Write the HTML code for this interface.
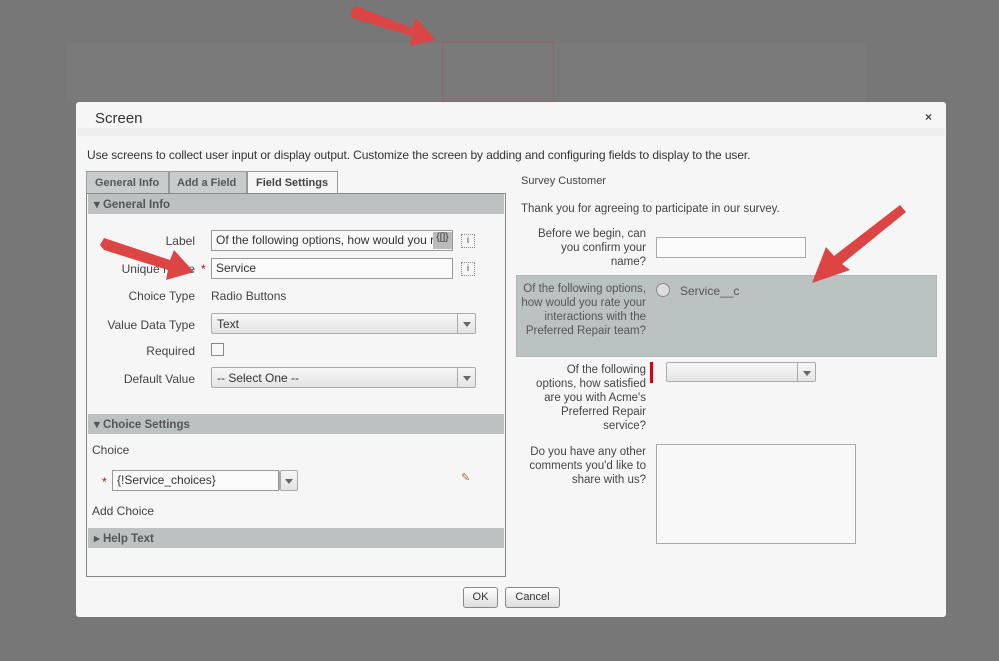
<!DOCTYPE html>
<html><head><meta charset="utf-8"><style>
*{margin:0;padding:0;box-sizing:border-box}
body{width:999px;height:661px;background:#777;position:relative;overflow:hidden;font-family:"Liberation Sans",sans-serif;font-size:12px;color:#333}
.a{position:absolute}
.bar{position:absolute;left:1px;right:1px;height:20px;background:#bcc2c2;font-weight:bold;color:#555;padding:3px 0 0 6px;font-size:11.5px}
.lbl{position:absolute;text-align:right;color:#444}
.inp{position:absolute;border:1px solid #999;background:#fafafa;height:21px;padding:2px 4px;color:#333}
.sel{position:absolute;border:1px solid #aaa;background:linear-gradient(#f7f7f7,#e4e4e4);height:21px;padding:3px 5px;border-radius:2px}
.sel:after{content:"";position:absolute;right:0;top:0;width:17px;height:19px;border-left:1px solid #aaa}
.sel i{position:absolute;right:4px;top:8px;border:4px solid transparent;border-top:5px solid #666}
.btn{position:absolute;border:1px solid #888;border-radius:3px;background:linear-gradient(#fff,#ddd);height:21px;text-align:center;padding-top:3px;font-size:11px}
.rl{position:absolute;text-align:right;color:#444;line-height:14px;font-size:11.5px}
</style></head><body>
<div class="a" style="left:66px;top:43px;width:800px;height:58px;background:#7a7a7a"></div>
<div class="a" style="left:442px;top:42px;width:112px;height:60px;border:1px dotted #a55"></div>

<div class="a" style="left:76px;top:102px;width:870px;height:515px;background:#f6f6f6;border-radius:3px"></div>
<div class="a" style="left:95px;top:110px;font-size:15px;color:#333">Screen</div>
<div class="a" style="left:925px;top:110px;font-size:12px;font-weight:bold;color:#444">×</div>
<div class="a" style="left:77px;top:128px;width:868px;height:8px;background:#eee"></div>
<div class="a" style="left:87px;top:148px;font-size:12px;color:#333;letter-spacing:-0.1px">Use screens to collect user input or display output. Customize the screen by adding and configuring fields to display to the user.</div>

<div class="a" style="left:86px;top:171px;width:83px;height:23px;border:1px solid #999;background:#c8cccc;font-weight:bold;color:#555;font-size:11px;padding:5px 0 0 8px">General Info</div>
<div class="a" style="left:169px;top:171px;width:78px;height:23px;border:1px solid #999;background:#c8cccc;font-weight:bold;color:#555;font-size:11px;padding:5px 0 0 7px">Add a Field</div>
<div class="a" style="left:247px;top:171px;width:91px;height:23px;border:1px solid #999;border-bottom:none;background:#f6f6f6;font-weight:bold;color:#444;font-size:11px;padding:5px 0 0 8px">Field Settings</div>

<div class="a" style="left:86px;top:193px;width:420px;height:384px;border:1px solid #888">
 <div class="bar" style="top:0">▾ General Info</div>
 <div class="bar" style="top:220px">▾ Choice Settings</div>
 <div class="bar" style="top:334px">▸ Help Text</div>
</div>
<div class="lbl" style="left:90px;width:105px;top:234px">Label</div>
<div class="inp" style="left:211px;top:230px;width:242px;white-space:nowrap;overflow:hidden">Of the following options, how would you r</div>
<div class="a" style="left:433px;top:232px;width:19px;height:17px;background:#bbb;font-size:10px;text-align:center">{[]}</div>
<div class="a" style="left:461px;top:234px;width:14px;height:14px;border:1px dotted #888;font-size:9px;text-align:center">i</div>
<div class="lbl" style="left:90px;width:105px;top:262px">Unique Name</div>
<div class="a" style="left:201px;top:262px;color:#c00">*</div>
<div class="inp" style="left:211px;top:258px;width:242px">Service</div>
<div class="a" style="left:461px;top:262px;width:14px;height:14px;border:1px dotted #888;font-size:9px;text-align:center">i</div>
<div class="lbl" style="left:90px;width:105px;top:289px">Choice Type</div>
<div class="a" style="left:211px;top:289px;color:#444">Radio Buttons</div>
<div class="lbl" style="left:90px;width:105px;top:318px">Value Data Type</div>
<div class="sel" style="left:211px;top:313px;width:265px">Text<i></i></div>
<div class="lbl" style="left:90px;width:105px;top:344px">Required</div>
<div class="a" style="left:211px;top:343px;width:13px;height:13px;border:1px solid #888;background:#f8f8f8"></div>
<div class="lbl" style="left:90px;width:105px;top:372px">Default Value</div>
<div class="sel" style="left:211px;top:367px;width:265px">-- Select One --<i></i></div>

<div class="a" style="left:92px;top:443px;color:#444">Choice</div>
<div class="a" style="left:102px;top:475px;color:#c00">*</div>
<div class="inp" style="left:112px;top:470px;width:167px">{!Service_choices}</div>
<div class="sel" style="left:280px;top:470px;width:18px;padding:0"><i style="right:4px"></i></div>
<div class="a" style="left:461px;top:471px;color:#b63;font-size:11px">✎</div>
<div class="a" style="left:92px;top:504px;color:#444">Add Choice</div>

<div class="a" style="left:521px;top:175px;color:#444;font-size:11px">Survey Customer</div>
<div class="a" style="left:521px;top:203px;color:#444;font-size:11.5px">Thank you for agreeing to participate in our survey.</div>
<div class="rl" style="left:528px;width:118px;top:227px">Before we begin, can you confirm your name?</div>
<div class="a" style="left:656px;top:237px;width:150px;height:21px;border:1px solid #aaa;background:#fafafa"></div>
<div class="a" style="left:516px;top:275px;width:421px;height:82px;background:#bbc2c2;border:1px dotted #aaa"></div>
<div class="rl" style="left:521px;width:125px;top:282px;color:#555">Of the following options, how would you rate your interactions with the Preferred Repair team?</div>
<div class="a" style="left:656px;top:283px;width:14px;height:14px;border-radius:50%;border:1px solid #888;background:#ddd"></div>
<div class="a" style="left:680px;top:284px;color:#555">Service__c</div>
<div class="rl" style="left:528px;width:118px;top:363px">Of the following options, how satisfied are you with Acme's Preferred Repair service?</div>
<div class="a" style="left:650px;top:362px;width:3px;height:21px;background:#d00"></div>
<div class="sel" style="left:666px;top:362px;width:150px;height:20px"><i></i></div>
<div class="rl" style="left:528px;width:118px;top:445px">Do you have any other comments you'd like to share with us?</div>
<div class="a" style="left:656px;top:444px;width:200px;height:100px;border:1px solid #aaa;background:#f8f8f8"></div>

<div class="btn" style="left:463px;top:587px;width:35px">OK</div>
<div class="btn" style="left:505px;top:587px;width:55px">Cancel</div>

<svg class="a" style="left:0;top:0" width="999" height="661">
 <g fill="#dd4444">
  <polygon points="350,12 356,6 412,28 416,18 436,40 410,46 412,36 352,18"/>
  <polygon points="100,245 104,238 170,260 174,250 194,272 166,280 168,270 104,250"/>
  <polygon points="900,205 906,212 842,264 850,270 812,283 826,247 834,256"/>
 </g>
</svg>
</body></html>
